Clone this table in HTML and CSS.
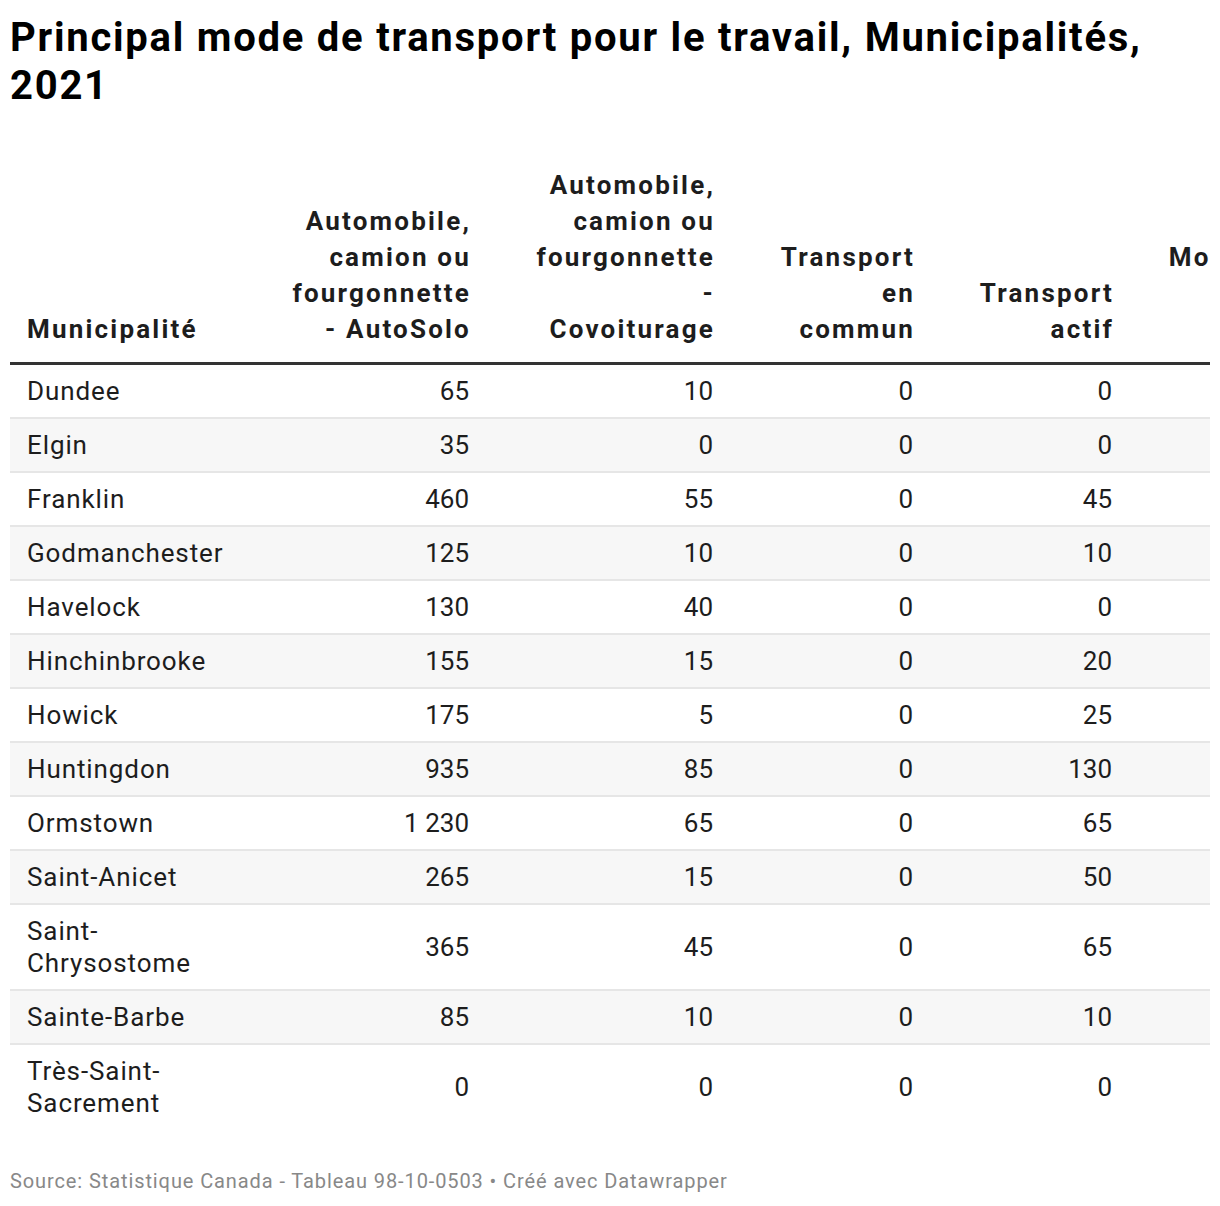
FILE: index.html
```html
<!DOCTYPE html>
<html lang="fr">
<head>
<meta charset="utf-8">
<title>Principal mode de transport pour le travail</title>
<link rel="stylesheet" href="styles.css">
</head>
<body>
<div class="chart">
  <h1 class="title">Principal mode de transport pour le travail, Municipalités, 2021</h1>
  <div class="table-wrap">
    <table class="data">
      <colgroup>
        <col class="c0"><col class="c1"><col class="c2"><col class="c3"><col class="c4"><col class="c5">
      </colgroup>
      <thead>
        <tr>
          <th class="left">Municipalité</th>
          <th class="h1">Automobile, camion ou fourgonnette - AutoSolo</th>
          <th>Automobile, camion ou fourgonnette - Covoiturage</th>
          <th>Transport en commun</th>
          <th>Transport actif</th>
          <th class="h5">Mode autre<br>ou<br>inconnu</th>
        </tr>
      </thead>
      <tbody>
        <tr><td class="left">Dundee</td><td>65</td><td>10</td><td>0</td><td>0</td><td>0</td></tr>
        <tr class="alt"><td class="left">Elgin</td><td>35</td><td>0</td><td>0</td><td>0</td><td>0</td></tr>
        <tr><td class="left">Franklin</td><td>460</td><td>55</td><td>0</td><td>45</td><td>10</td></tr>
        <tr class="alt"><td class="left">Godmanchester</td><td>125</td><td>10</td><td>0</td><td>10</td><td>0</td></tr>
        <tr><td class="left">Havelock</td><td>130</td><td>40</td><td>0</td><td>0</td><td>0</td></tr>
        <tr class="alt"><td class="left">Hinchinbrooke</td><td>155</td><td>15</td><td>0</td><td>20</td><td>0</td></tr>
        <tr><td class="left">Howick</td><td>175</td><td>5</td><td>0</td><td>25</td><td>0</td></tr>
        <tr class="alt"><td class="left">Huntingdon</td><td>935</td><td>85</td><td>0</td><td>130</td><td>10</td></tr>
        <tr><td class="left">Ormstown</td><td>1 230</td><td>65</td><td>0</td><td>65</td><td>15</td></tr>
        <tr class="alt"><td class="left">Saint-Anicet</td><td>265</td><td>15</td><td>0</td><td>50</td><td>0</td></tr>
        <tr><td class="left">Saint-Chrysostome</td><td>365</td><td>45</td><td>0</td><td>65</td><td>10</td></tr>
        <tr class="alt"><td class="left">Sainte-Barbe</td><td>85</td><td>10</td><td>0</td><td>10</td><td>0</td></tr>
        <tr class="last"><td class="left">Très-Saint-Sacrement</td><td>0</td><td>0</td><td>0</td><td>0</td><td>0</td></tr>
      </tbody>
    </table>
  </div>
  <p class="footer">Source: Statistique Canada - Tableau 98-10-0503 • Créé avec Datawrapper</p>
</div>
</body>
</html>
```
FILE: styles.css
```css
html, body {
  margin: 0;
  padding: 0;
  background: #ffffff;
}

.chart {
  padding: 14px 10px 0 10px;
  font-family: Roboto, "Liberation Sans", sans-serif;
  color: #1d1d1d;
}

.title {
  margin: 0;
  font-size: 40px;
  line-height: 48px;
  font-weight: 700;
  letter-spacing: 1.75px;
  color: #000000;
}

.table-wrap {
  width: 1200px;
  overflow: hidden;
  margin-top: 57px;
}

.data {
  border-collapse: collapse;
  table-layout: fixed;
  width: 1319px;
  font-size: 26px;
}

.c0 { width: 244px; }
.c1 { width: 232px; }
.c2 { width: 244px; }
.c3 { width: 200px; }
.c4 { width: 199px; }
.c5 { width: 200px; }

.data th {
  font-weight: 700;
  line-height: 36px;
  letter-spacing: 2.2px;
  text-align: right;
  vertical-align: bottom;
  padding: 0 15px 15px 44px;
  border-bottom: 3px solid #333333;
  color: #1d1d1d;
}

.data th.left {
  padding-left: 17px;
}

.data th.h1 {
  padding-left: 28px;
}

.data th.h5 {
  padding-left: 10px;
  padding-right: 5px;
}

.data td {
  line-height: 32px;
  text-align: right;
  vertical-align: middle;
  padding: 10px 17px;
  border-bottom: 2px solid #e6e6e6;
}

.data .left {
  text-align: left;
}

.data td.left {
  letter-spacing: 0.9px;
}

.data tr.alt td {
  background: #f7f7f7;
}

.data tr.last td {
  border-bottom: none;
}

.footer {
  margin: 39px 0 0 0;
  font-size: 20px;
  line-height: 26px;
  letter-spacing: 0.9px;
  color: #888888;
}
```
